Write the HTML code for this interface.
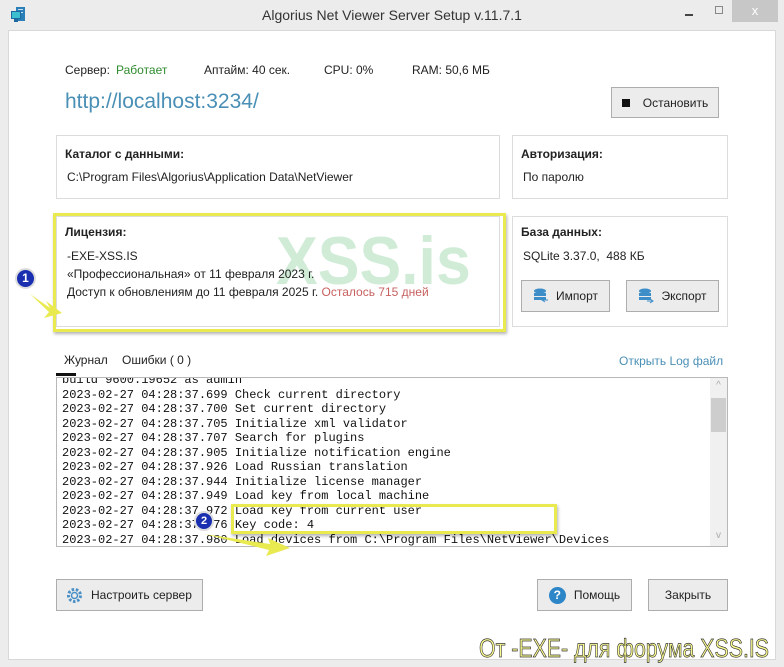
<!DOCTYPE html>
<html><head><meta charset="utf-8"><style>
*{margin:0;padding:0;box-sizing:border-box}
body{width:784px;height:667px;background:#ececec;font-family:"Liberation Sans",sans-serif;font-size:12px;color:#222;position:relative;overflow:hidden}
.a{position:absolute}
.client{left:8px;top:30px;width:768px;height:630px;background:#fff;border:1px solid #d8d8d8}
.box{border:1px solid #dcdcdc;background:#fff}
.btn{border:1px solid #adadad;background:#ececec;display:flex;align-items:center;justify-content:center;font-size:12px;color:#222}
.b{font-weight:bold;font-size:12px}
.log{font-family:"Liberation Mono",monospace;font-size:12px;line-height:14.55px;color:#111;white-space:pre}
</style></head><body>
<div class="a" style="left:9px;top:6px;width:18px;height:18px">
<svg width="18" height="18"><rect x="7" y="1" width="9" height="14" fill="#2a7fb8"/><rect x="9" y="3" width="5" height="1" fill="#cde"/><rect x="9" y="6" width="5" height="1" fill="#cde"/><rect x="2" y="5" width="10" height="8" fill="#1e6aa0"/><rect x="3" y="6" width="8" height="6" fill="#3cc0d0"/><rect x="5" y="13" width="4" height="3" fill="#1e6aa0"/></svg></div>
<div class="a" style="left:0;top:7px;width:784px;text-align:center;font-size:14px;color:#333">Algorius Net Viewer Server Setup v.11.7.1</div>
<div class="a" style="left:685px;top:14px;width:8px;height:2px;background:#444"></div>
<div class="a" style="left:715px;top:6px;width:8px;height:8px;border:1px solid #888"></div>
<div class="a" style="left:732px;top:0;width:46px;height:22px;background:#c7c7c7;color:#fff;text-align:center;font-size:13px;line-height:22px">x</div>
<div class="a client"></div>

<div class="a" style="left:65px;top:63px;font-size:12px">Сервер:</div>
<div class="a" style="left:116px;top:63px;color:#2e8b2e">Работает</div>
<div class="a" style="left:204px;top:63px">Аптайм: 40 сек.</div>
<div class="a" style="left:324px;top:63px">CPU: 0%</div>
<div class="a" style="left:412px;top:63px">RAM: 50,6 МБ</div>
<div class="a" style="left:65px;top:90px;font-size:21px;color:#4a8fb5">http://localhost:3234/</div>
<div class="a btn" style="left:611px;top:87px;width:108px;height:31px"><span style="display:inline-block;width:8px;height:8px;background:#111;margin-right:13px"></span>Остановить</div>

<div class="a box" style="left:56px;top:135px;width:444px;height:64px"></div>
<div class="a b" style="left:65px;top:147px">Каталог с данными:</div>
<div class="a" style="left:67px;top:170px">C:\Program Files\Algorius\Application Data\NetViewer</div>
<div class="a box" style="left:512px;top:135px;width:216px;height:64px"></div>
<div class="a b" style="left:521px;top:147px">Авторизация:</div>
<div class="a" style="left:523px;top:170px">По паролю</div>

<div class="a box" style="left:56px;top:216px;width:444px;height:111px"></div>
<div class="a" style="left:276px;top:222px;font-size:68px;font-weight:bold;color:rgba(120,200,140,0.35);transform:scaleX(0.92);transform-origin:left">XSS.is</div>
<div class="a b" style="left:65px;top:225px">Лицензия:</div>
<div class="a" style="left:67px;top:249px">-EXE-XSS.IS</div>
<div class="a" style="left:67px;top:267px">«Профессиональная» от 11 февраля 2023 г.</div>
<div class="a" style="left:67px;top:285px">Доступ к обновлениям до 11 февраля 2025 г. <span style="color:#c86060">Осталось 715 дней</span></div>
<div class="a" style="left:53px;top:213px;width:453px;height:119px;border:3px solid #e8ea50;box-shadow:1px 2px 3px rgba(0,0,0,.3)"></div>
<div class="a" style="left:15px;top:268px;width:21px;height:21px;border-radius:50%;background:#1a2fb0;border:2px solid #ddd;color:#fff;font-size:12px;font-weight:bold;text-align:center;line-height:17px">1</div>
<svg class="a" style="left:26px;top:290px" width="40" height="32"><path d="M4 4 L24 18 L20 11 L36 23 L18 28 L23 22 Z" fill="#e8ea50"/></svg>

<div class="a box" style="left:512px;top:216px;width:216px;height:111px"></div>
<div class="a b" style="left:521px;top:225px">База данных:</div>
<div class="a" style="left:523px;top:249px">SQLite 3.37.0,&nbsp; 488 КБ</div>
<div class="a btn" style="left:521px;top:280px;width:89px;height:32px"><svg width="16" height="16" style="margin-right:7px"><ellipse cx="7" cy="3" rx="6" ry="2.5" fill="#3d8ec8"/><rect x="1" y="5" width="12" height="3" fill="#3d8ec8"/><rect x="1" y="9" width="12" height="3" fill="#3d8ec8"/><path d="M9 12 h6 M12 10 l-3 2 3 2" stroke="#3d8ec8" fill="none"/></svg>Импорт</div>
<div class="a btn" style="left:626px;top:280px;width:93px;height:32px"><svg width="16" height="16" style="margin-right:7px"><ellipse cx="7" cy="3" rx="6" ry="2.5" fill="#3d8ec8"/><rect x="1" y="5" width="12" height="3" fill="#3d8ec8"/><rect x="1" y="9" width="12" height="3" fill="#3d8ec8"/><path d="M9 13 h6 M12 11 l3 2 -3 2" stroke="#3d8ec8" fill="none"/></svg>Экспорт</div>

<div class="a" style="left:64px;top:353px">Журнал</div>
<div class="a" style="left:122px;top:353px">Ошибки ( 0 )</div>
<div class="a" style="left:56px;top:373px;width:20px;height:3px;background:#111"></div>
<div class="a" style="left:619px;top:354px;color:#4a8fb5">Открыть Log файл</div>

<div class="a" style="left:56px;top:377px;width:672px;height:170px;border:1px solid #b8b8b8;overflow:hidden;background:#fff">
<div class="log a" style="left:5px;top:-5px">build 9600.19652 as admin
2023-02-27 04:28:37.699 Check current directory
2023-02-27 04:28:37.700 Set current directory
2023-02-27 04:28:37.705 Initialize xml validator
2023-02-27 04:28:37.707 Search for plugins
2023-02-27 04:28:37.905 Initialize notification engine
2023-02-27 04:28:37.926 Load Russian translation
2023-02-27 04:28:37.944 Initialize license manager
2023-02-27 04:28:37.949 Load key from local machine
2023-02-27 04:28:37.972 Load key from current user
2023-02-27 04:28:37.976 Key code: 4
2023-02-27 04:28:37.980 Load devices from C:\Program Files\NetViewer\Devices</div>
<div class="a" style="left:653px;top:0;width:17px;height:168px;background:#f0f0f0"></div>
<div class="a" style="left:654px;top:20px;width:15px;height:34px;background:#cdcdcd"></div>
<div class="a" style="left:654px;top:2px;width:15px;color:#aaa;font-size:10px;text-align:center">^</div>
<div class="a" style="left:654px;top:152px;width:15px;color:#aaa;font-size:10px;text-align:center">v</div>
</div>
<div class="a" style="left:231px;top:504px;width:326px;height:30px;border:3px solid #e8ea50;box-shadow:1px 2px 3px rgba(0,0,0,.3)"></div>
<div class="a" style="left:194px;top:511px;width:20px;height:20px;border-radius:50%;background:#1a2fb0;border:2px solid #ddd;color:#fff;font-size:11px;font-weight:bold;text-align:center;line-height:16px">2</div>
<svg class="a" style="left:200px;top:530px" width="95" height="30"><path d="M4 4 L70 14 L68 8 L90 18 L66 26 L69 20 Z" fill="#e8ea50"/></svg>

<div class="a btn" style="left:56px;top:579px;width:147px;height:32px;justify-content:flex-start;padding-left:9px"><svg width="17" height="17" style="margin-right:8px"><circle cx="8.5" cy="8.5" r="6" fill="none" stroke="#4a90c8" stroke-width="3" stroke-dasharray="2.5 1.7"/><circle cx="8.5" cy="8.5" r="3" fill="none" stroke="#4a90c8" stroke-width="1.5"/></svg>Настроить сервер</div>
<div class="a btn" style="left:537px;top:579px;width:95px;height:32px"><span style="display:inline-block;width:17px;height:17px;border-radius:50%;background:#2c86c8;color:#fff;font-weight:bold;text-align:center;line-height:17px;margin-right:8px">?</span>Помощь</div>
<div class="a btn" style="left:648px;top:579px;width:80px;height:32px">Закрыть</div>

<div class="a" style="left:479px;top:633px;font-size:26px;color:#fbfb90;-webkit-text-stroke:0.7px #333;white-space:nowrap;transform:scaleX(0.82);transform-origin:left">От -EXE- для форума XSS.IS</div>
</body></html>
